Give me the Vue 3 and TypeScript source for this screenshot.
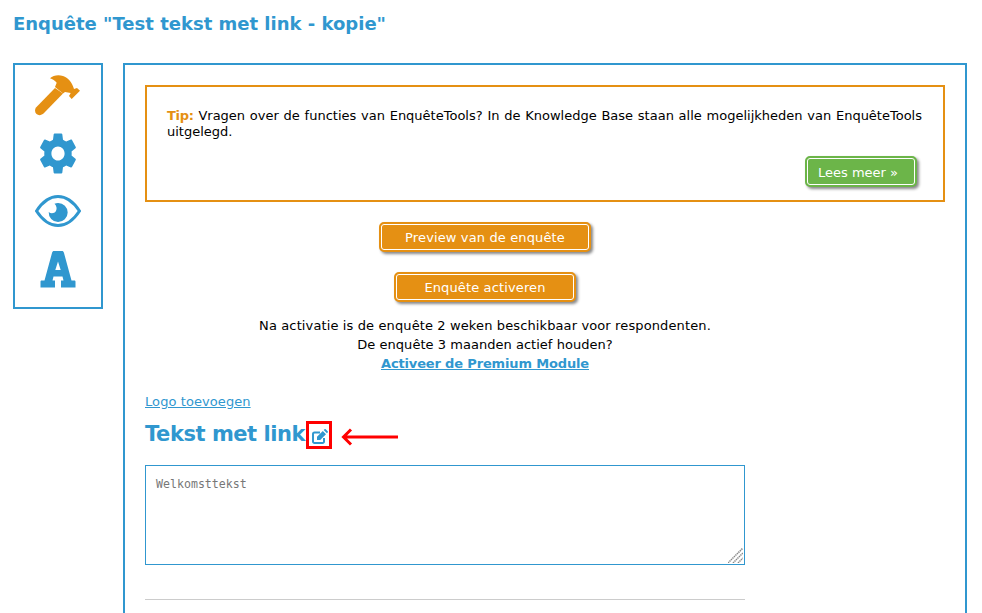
<script setup lang="ts">
const sideIcons = ['hammer', 'gear', 'eye', 'font']
</script>

<template>
  <div class="page">
    <h1 class="title">Enquête "Test tekst met link - kopie"</h1>
    <div class="columns">
      <nav class="side">
        <a v-for="icon in sideIcons" :key="icon" class="side-item" href="#">
          <svg v-if="icon === 'hammer'" width="46" height="42" viewBox="0 0 46 42">
            <path d="M1 33.500 L20 14 L28 19.500 L9 39 C6.500 41.500 3.500 41.800 1.500 40 C-0.300 38.300 -0.300 35 1 33.500 Z" fill="#e59013" />
            <path d="M15 4.300 C18 1.500 23 0.500 28 2 C33 3.500 37 8 39 15 L42 14 L45 16.700 L36.700 25 L34 22 L35.700 19 L30 18 L28 19.500 L20 13 L21.700 8.700 C20 6.500 17.500 5 15 4.300 Z" fill="#e59013" />
          </svg>
          <svg v-else-if="icon === 'gear'" width="44" height="47" viewBox="0 0 24 24" preserveAspectRatio="none">
            <path fill="#3097cf" d="M19.4 13c.04-.32.06-.66.06-1s-.02-.68-.07-1l2.17-1.69c.2-.15.25-.42.13-.64l-2.05-3.55c-.13-.23-.4-.3-.63-.23l-2.55 1.03c-.53-.4-1.1-.74-1.73-1l-.39-2.71C14.3 1.96 14.09 1.8 13.85 1.8h-3.7c-.25 0-.46.17-.5.42l-.38 2.71c-.63.26-1.2.6-1.73 1L4.98 4.9c-.23-.09-.5 0-.63.22L2.3 8.67c-.13.22-.07.49.12.64L4.6 11c-.05.32-.08.67-.08 1s.02.68.07 1l-2.17 1.69c-.2.15-.25.42-.13.64l2.05 3.55c.13.23.4.3.63.23l2.55-1.03c.53.4 1.1.74 1.73 1l.39 2.71c.04.25.25.42.5.42h3.7c.25 0 .46-.17.5-.42l.38-2.71c.63-.26 1.2-.6 1.73-1l2.55 1.03c.23.09.5 0 .63-.22l2.05-3.55c.13-.22.07-.49-.12-.64L19.4 13zM12 15.6c-2 0-3.6-1.6-3.6-3.6S10 8.400 12 8.400s3.600 1.600 3.600 3.600-1.600 3.600-3.600 3.600z" />
          </svg>
          <svg v-else-if="icon === 'eye'" width="46" height="32" viewBox="0 0 46 32">
            <path d="M1.500 16 C8 6 15 1.500 23 1.500 S38 6 44.500 16 C38 26 31 30.500 23 30.500 S8 26 1.500 16 Z" fill="none" stroke="#3097cf" stroke-width="3" />
            <path d="M23 8 A9.500 9.500 0 1 1 13.700 17 C16 19 19.500 18.500 21 16 C22.300 13.500 21.500 10.500 19.500 8.700 C20.700 8.200 21.800 8 23 8 Z" fill="#3097cf" />
          </svg>
          <svg v-else width="36" height="37" viewBox="0 0 36 37">
            <path fill="#3097cf" fill-rule="evenodd" d="M14 0 H22 C23 0 23.500 0.500 24 2 L31.500 29.500 H34.500 C35.300 29.500 35.500 30 35.500 31 V36.500 H21 V29.500 H23.500 L22.500 25.500 H13.500 L12.500 29.500 H15 V36.500 H0.500 V31 C0.500 30 0.700 29.500 1.500 29.500 H4.500 L12 2 C12.500 0.500 13 0 14 0 Z M18 10.500 L15.300 19 H20.700 Z" />
          </svg>
        </a>
      </nav>

      <main class="content">
        <section class="tip">
          <p class="tip-text">
            <b class="tip-label">Tip:</b> Vragen over de functies van EnquêteTools? In de Knowledge Base staan alle mogelijkheden van EnquêteTools uitgelegd.
          </p>
          <div class="tip-actions">
            <a class="btn btn-green" href="#">Lees meer »</a>
          </div>
        </section>

        <div class="activate">
          <a class="btn btn-orange btn-preview" href="#">Preview van de enquête</a>
          <a class="btn btn-orange btn-activate" href="#">Enquête activeren</a>
          <p class="activate-text">
            Na activatie is de enquête 2 weken beschikbaar voor respondenten.<br />
            <span class="activate-sub">De enquête 3 maanden actief houden?</span><br />
            <a class="premium" href="#">Activeer de Premium Module</a>
          </p>
        </div>

        <a class="logo-link" href="#">Logo toevoegen</a>

        <div class="heading-row">
          <h2 class="survey-title">Tekst met link</h2>
          <a class="edit" href="#">
            <svg width="16" height="15" viewBox="0 0 16 15">
              <path d="M12 9 V12.500 A1.500 1.500 0 0 1 10.500 14 H2.500 A1.500 1.500 0 0 1 1 12.500 V5 A1.500 1.500 0 0 1 2.500 3.500 H8" fill="none" stroke="#3097cf" stroke-width="2" />
              <path d="M5 7.800 L10.800 2 L14 5.200 L8.200 11 H5 Z M11.700 1.100 L12.500 0.300 C12.900 0 13.300 0 13.700 0.300 L15.700 2.300 C16 2.700 16 3.100 15.700 3.500 L14.900 4.300 Z" fill="#3097cf" />
            </svg>
          </a>
          <span class="marker"></span>
          <svg class="arrow" width="58" height="18" viewBox="0 0 58 18">
            <path d="M57 9 H3 M10 1.500 L2.500 9 L10 16.500" fill="none" stroke="#ff0000" stroke-width="3" />
          </svg>
        </div>

        <div class="welcome-wrap">
          <textarea class="welcome" placeholder="Welkomsttekst"></textarea>
          <svg class="grip" width="15" height="15" viewBox="0 0 15 15">
            <path d="M0 15 L15 0 M5 15 L15 5 M10 15 L15 10" stroke="#888" stroke-width="1.500" stroke-dasharray="1.400 0.700" />
          </svg>
        </div>
        <hr class="divider" />
      </main>
    </div>
  </div>
</template>

<style scoped>
.page {
  height: 613px;
  overflow: hidden;
  padding: 13px 15px 0 13px;
  box-sizing: border-box;
  font-family: "DejaVu Sans", Verdana, sans-serif;
  font-size: 13px;
  color: #000;
  background: #fff;
}
.title {
  margin: 0 0 29px;
  font-size: 18px;
  line-height: 21px;
  font-weight: bold;
  color: #3097cf;
}
.columns {
  display: flex;
  align-items: flex-start;
  gap: 20px;
}
.side {
  width: 90px;
  height: 246px;
  box-sizing: border-box;
  border: 2px solid #3097cf;
  display: flex;
  flex-direction: column;
  align-items: center;
  padding-top: 1px;
}
.side-item {
  height: 58px;
  flex: none;
  display: flex;
  align-items: center;
  justify-content: center;
}
.content {
  flex: 1;
  min-height: 700px;
  box-sizing: border-box;
  border: 2px solid #3097cf;
  padding: 20px;
}
.tip {
  height: 117px;
  box-sizing: border-box;
  border: 2px solid #e59013;
  padding: 21px 21px 20px 20px;
  margin-bottom: 20px;
}
.tip-text {
  margin: 0;
  line-height: 16px;
  text-align: justify;
}
.tip-label {
  color: #e59013;
  letter-spacing: -0.3px;
}
.tip-actions {
  display: flex;
  justify-content: flex-end;
  margin-top: 16px;
  padding-right: 5px;
}
.btn {
  display: block;
  box-sizing: border-box;
  border-radius: 5px;
  color: #fff;
  text-decoration: none;
  box-shadow: inset 0 0 0 1px #fff, 2px 2px 3px #888;
}
.btn-green {
  width: 112px;
  height: 31px;
  line-height: 29px;
  padding-left: 11px;
  background: #6cb549;
  border: 2px solid #6cb549;
}
.btn-orange {
  height: 30px;
  line-height: 28px;
  text-align: center;
  letter-spacing: 0.13px;
  background: #e59013;
  border: 2px solid #e59013;
}
.btn-preview {
  width: 212px;
  margin-bottom: 20px;
}
.btn-activate {
  width: 182px;
  margin-bottom: 14px;
}
.activate {
  width: 680px;
  display: flex;
  flex-direction: column;
  align-items: center;
}
.activate-text {
  margin: 0;
  line-height: 19px;
  letter-spacing: 0.12px;
  text-align: center;
}
.activate-sub {
  letter-spacing: 0.03px;
}
.premium {
  font-weight: bold;
  letter-spacing: -0.15px;
  color: #3097cf;
}
.logo-link {
  display: block;
  margin-top: 20px;
  line-height: 17px;
  letter-spacing: 0.08px;
  color: #3097cf;
}
.heading-row {
  position: relative;
  display: flex;
  align-items: center;
  height: 28px;
  margin-top: 10px;
  margin-bottom: 17px;
}
.survey-title {
  margin: 0;
  font-size: 21px;
  letter-spacing: -0.45px;
  font-weight: bold;
  color: #3097cf;
}
.edit {
  display: flex;
  margin-left: 7px;
  margin-top: 5px;
}
.marker {
  position: absolute;
  left: 161px;
  top: 1px;
  width: 26px;
  height: 28px;
  box-sizing: border-box;
  border: 3px solid #ff0000;
}
.arrow {
  position: absolute;
  left: 196px;
  top: 8px;
}
.welcome-wrap {
  position: relative;
  width: 600px;
  height: 100px;
}
.welcome {
  display: block;
  width: 100%;
  height: 100%;
  box-sizing: border-box;
  border: 1px solid #3097cf;
  padding: 11px 10px 10px;
  font-family: "DejaVu Sans Mono", monospace;
  font-size: 11.6px;
  outline: none;
  resize: none;
}
.welcome::placeholder {
  color: #777;
}
.grip {
  position: absolute;
  right: 2px;
  bottom: 2px;
}
.divider {
  width: 600px;
  margin: 34px 0 0;
  border: 0;
  border-top: 1px solid #cccccc;
}
</style>

<style>
html, body {
  margin: 0;
  overflow: hidden;
}
</style>
